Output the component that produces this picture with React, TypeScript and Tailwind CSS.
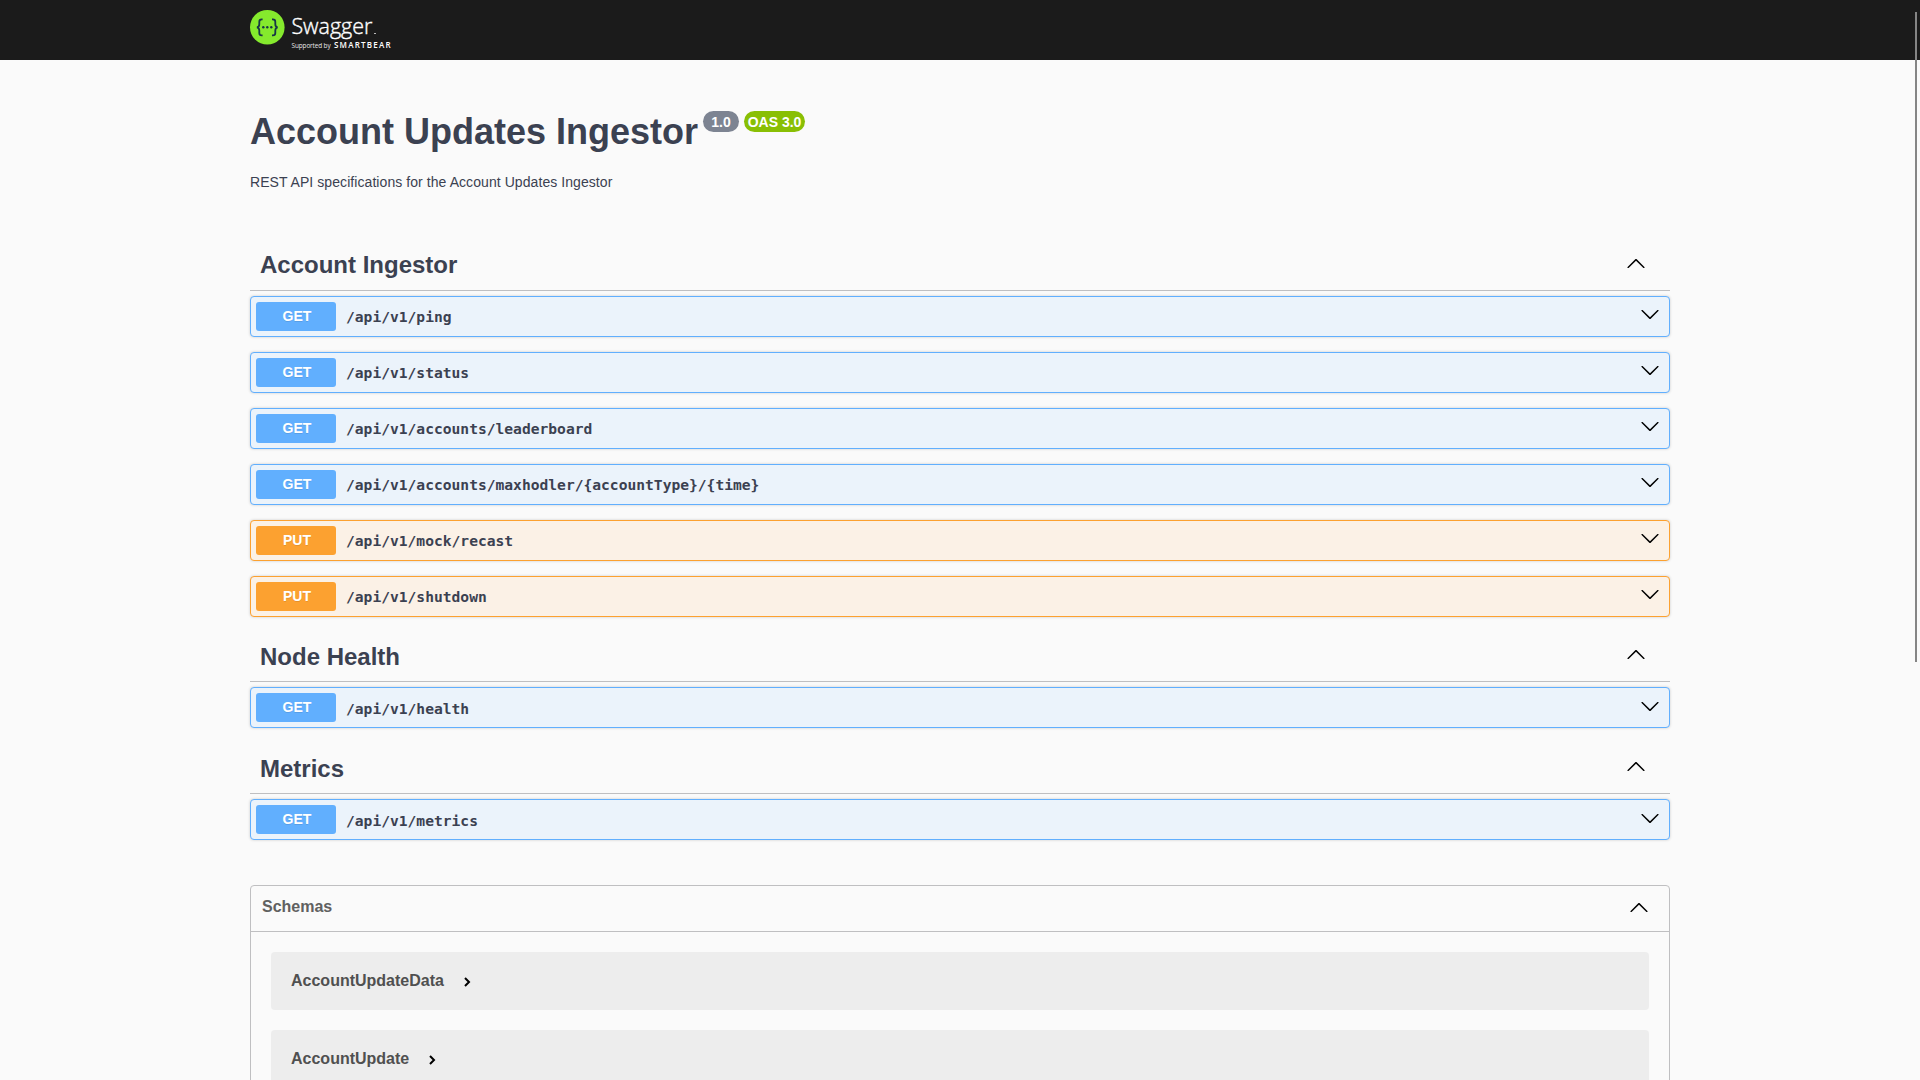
type Method = "GET" | "PUT";
type Operation = { method: Method; path: string };

const styles: Record<Method, { row: string; badge: string }> = {
  GET: { row: "border-[#61affe] bg-[#ebf3fb]", badge: "bg-[#61affe]" },
  PUT: { row: "border-[#fca130] bg-[#fbf1e6]", badge: "bg-[#fca130]" },
};

const sections: { name: string; gap: string; nudge: string; operations: Operation[] }[] = [
  {
    name: "Account Ingestor",
    gap: "mb-3.5",
    nudge: "",
    operations: [
      { method: "GET", path: "/api/v1/ping" },
      { method: "GET", path: "/api/v1/status" },
      { method: "GET", path: "/api/v1/accounts/leaderboard" },
      { method: "GET", path: "/api/v1/accounts/maxhodler/{accountType}/{time}" },
      { method: "PUT", path: "/api/v1/mock/recast" },
      { method: "PUT", path: "/api/v1/shutdown" },
    ],
  },
  { name: "Node Health", gap: "mb-[15px]", nudge: "pt-0.5", operations: [{ method: "GET", path: "/api/v1/health" }] },
  { name: "Metrics", gap: "mb-[15px]", nudge: "pt-0.5", operations: [{ method: "GET", path: "/api/v1/metrics" }] },
];

const models = ["AccountUpdateData", "AccountUpdate"];

function Arrow({ down = false }: { down?: boolean }) {
  return (
    <svg width="20" height="20" viewBox="0 0 20 20" className="block shrink-0">
      {down ? (
        <path d="M17.418 6.109c.272-.268.709-.268.979 0s.271.701 0 .969l-7.908 7.83c-.27.268-.707.268-.979 0l-7.908-7.83c-.27-.268-.27-.701 0-.969.271-.268.709-.268.979 0L10 13.25l7.418-7.141z" />
      ) : (
        <path d="M17.418 14.908c.272.27.709.27.979 0s.271-.701 0-.969l-7.908-7.83c-.27-.268-.707-.268-.979 0l-7.908 7.83c-.27.268-.27.701 0 .969.271.268.709.268.979 0L10 7.767l7.418 7.141z" />
      )}
    </svg>
  );
}

function Logo() {
  return (
    <svg width="150" height="60" viewBox="0 0 150 60" className="block">
      <circle cx="17.3" cy="27.3" r="17.3" fill="#85ea2d" />
      <g fill="none" stroke="#173647" strokeWidth="1.8">
        <path d="M12.6 19.3h-.8c-1.9 0-2.5.8-2.5 2.4v2.5c0 1.9-.7 2.9-2.4 3.1c1.7.2 2.4 1.2 2.4 3.1v2.5c0 1.6.6 2.4 2.5 2.4h.8" />
        <path d="M22 19.3h.8c1.9 0 2.5.8 2.5 2.4v2.5c0 1.9.7 2.9 2.4 3.1c-1.7.2-2.4 1.2-2.4 3.1v2.5c0 1.6-.6 2.4-2.5 2.4h-.8" />
      </g>
      <g fill="#173647">
        <circle cx="13.3" cy="27.3" r="1.2" />
        <circle cx="17.3" cy="27.3" r="1.2" />
        <circle cx="21.3" cy="27.3" r="1.2" />
      </g>
      <g fill="#fff" fontFamily="'Open Sans', sans-serif">
        <text x="41.4" y="34.3" fontSize="22.5" fontWeight="300" stroke="#fff" strokeWidth=".4" textLength="81" lengthAdjust="spacingAndGlyphs">Swagger</text>
        <rect x="124" y="33" width="2" height="1" opacity=".7" />
        <text x="41.6" y="48" fontSize="6.4" textLength="39" opacity=".9">Supported by</text>
        <text x="84" y="48" fontSize="8" fontWeight="600" textLength="56.5">SMARTBEAR</text>
      </g>
    </svg>
  );
}

function OperationRow({ method, path, nudge }: Operation & { nudge: string }) {
  return (
    <div className={`flex h-[41px] items-center rounded border pr-[9px] pl-[5px] shadow-[0_0_3px_rgba(0,0,0,0.19)] ${styles[method].row}`}>
      <span className={`h-[29px] w-20 rounded-[3px] pl-0.5 text-center text-sm leading-[28px] font-bold text-white [text-shadow:0_1px_0_rgba(0,0,0,0.1)] ${styles[method].badge}`}>
        {method}
      </span>
      <span className={`ml-[10px] flex-1 font-['DejaVu_Sans_Mono',monospace] text-[14.62px] leading-5 font-bold ${nudge}`}>{path}</span>
      <span className={`mb-1.5 ${nudge}`}><Arrow down /></span>
    </div>
  );
}

export default function App() {
  return (
    <div className="h-[1080px] overflow-hidden bg-[#fafafa] font-['Liberation_Sans',Arial,sans-serif] text-[#3b4151]">
      <header className="h-[60px] bg-[#1b1b1b]">
        <div className="mx-auto w-[1420px]"><Logo /></div>
      </header>
      <main className="mx-auto w-[1420px]">
        <div className="flex items-start pt-[50px]">
          <h1 className="pt-px text-[36px] leading-[42px] font-bold">Account Updates Ingestor</h1>
          <span className="mt-px ml-[5px] h-[21px] w-9 rounded-full bg-[#7d8492] text-center text-sm leading-[22px] font-bold text-white">1.0</span>
          <span className="mt-px ml-[5px] h-[21px] w-[61px] rounded-full bg-[#89bf04] text-center text-sm leading-[22px] font-bold text-white">OAS 3.0</span>
        </div>
        <p className="mt-[21px] h-[66px] text-sm leading-4 tracking-[0.07px]">REST API specifications for the Account Updates Ingestor</p>
        {sections.map((s) => (
          <section key={s.name} className={s.gap}>
            <div className="mb-[5px] flex h-[51px] items-center justify-between border-b border-[#bfbfc1] pr-6 pl-[10px]">
              <h2 className={`text-2xl font-bold ${s.nudge}`}>{s.name}</h2>
              <span className="mb-1"><Arrow /></span>
            </div>
            <div className="flex flex-col gap-[15px]">
              {s.operations.map((o) => <OperationRow key={o.path} nudge={s.nudge} {...o} />)}
            </div>
          </section>
        ))}
        <section className="mt-[45px] h-[300px] rounded border border-[#bfbfc1]">
          <div className="flex h-[46px] items-center justify-between border-b border-[#bfbfc1] pr-5 pl-[11px] text-[#606060]">
            <h4 className="-mt-1 text-base font-bold">Schemas</h4>
            <span className="mb-1 text-black"><Arrow /></span>
          </div>
          <div className="flex flex-col gap-5 p-5">
            {models.map((m) => (
              <div key={m} className="flex h-[58px] items-center gap-[15px] rounded bg-[#ededed] pl-5 text-base font-bold text-[#505050]">
                <span>{m}</span>
                <svg width="16" height="24" viewBox="0 0 16 24"><path d="m6 9 4 4-4 4" fill="none" stroke="#000" strokeWidth="2" /></svg>
              </div>
            ))}
          </div>
        </section>
      </main>
      <div className="absolute top-3 left-[1915px] h-[650px] w-0.5 bg-[#858585]" />
    </div>
  );
}
